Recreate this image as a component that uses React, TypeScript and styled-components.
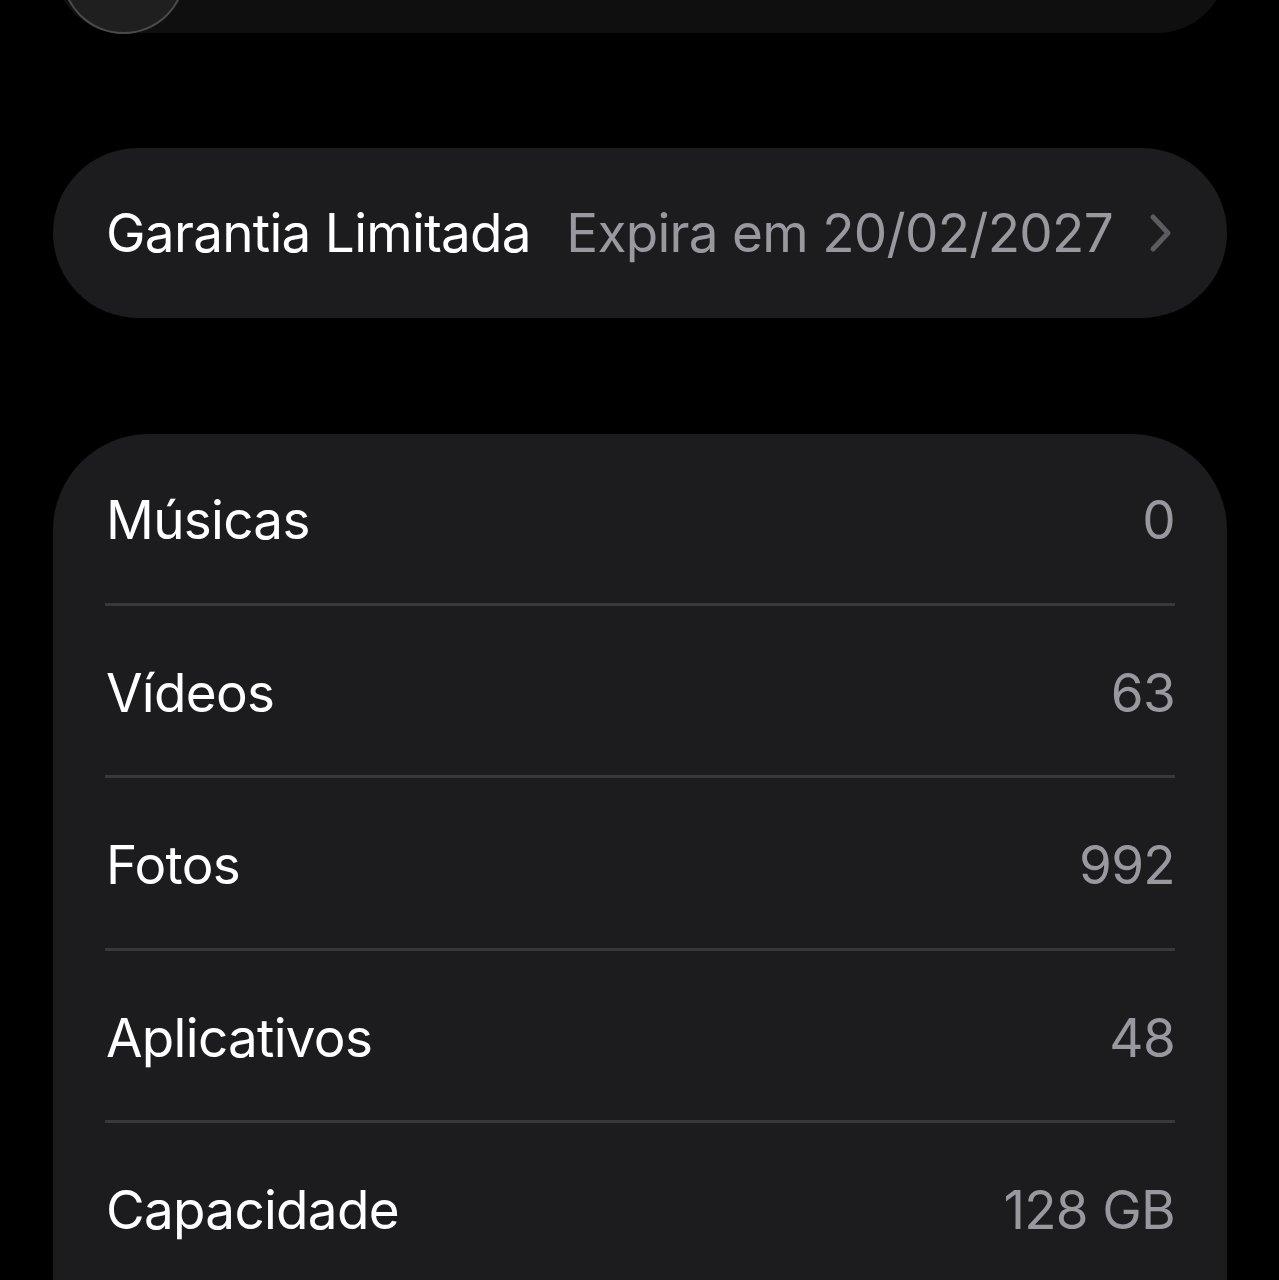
import styled, { createGlobalStyle } from 'styled-components'

const Global = createGlobalStyle`
  html, body {
    margin: 0;
    background: #000;
  }
  body {
    font-family: Inter, "Noto Sans", "Liberation Sans", sans-serif;
    -webkit-font-smoothing: antialiased;
  }
`

const rows = [
  { label: 'Músicas', value: '0' },
  { label: 'Vídeos', value: '63' },
  { label: 'Fotos', value: '992' },
  { label: 'Aplicativos', value: '48' },
  { label: 'Capacidade', value: '128 GB' },
]

export default function App() {
  return (
    <Page>
      <Global />
      <TopCard>
        <Avatar />
      </TopCard>
      <PillCard>
        <Label>Garantia Limitada</Label>
        <Expiry>Expira em 20/02/2027</Expiry>
        <Chevron viewBox='0 0 24 40' aria-hidden>
          <path d='M4 4 L19 20 L4 36' />
        </Chevron>
      </PillCard>
      <ListCard>
        {rows.map((r) => (
          <Row key={r.label}>
            <Label>{r.label}</Label>
            <Value>{r.value}</Value>
          </Row>
        ))}
      </ListCard>
    </Page>
  )
}

const Page = styled.main`
  padding: 0 52px 0 53px;
  height: 1280px;
  overflow: hidden;
  display: flex;
  flex-direction: column;
`

const TopCard = styled.div`
  height: 200px;
  margin-top: -167px;
  border-radius: 70px;
  background: #0f0f10;
  display: flex;
  align-items: flex-end;
  padding-left: 8px;
  flex-shrink: 0;
`

const Avatar = styled.div`
  width: 125px;
  height: 125px;
  margin-bottom: -1px;
  border-radius: 50%;
  background: #1f1f20;
  box-shadow: inset 0 0 0 2px #4a4a4c;
`

const PillCard = styled.div`
  margin-top: 115px;
  height: 170px;
  border-radius: 85px;
  background: #1c1c1e;
  display: flex;
  align-items: center;
  padding: 0 54px 0 53px;
  flex-shrink: 0;
`

const Label = styled.span`
  color: #fff;
  font-size: 53px;
  letter-spacing: -0.7px;
  white-space: nowrap;
`

const Expiry = styled.span`
  color: #98989e;
  font-size: 53px;
  letter-spacing: -0.7px;
  margin-left: auto;
  white-space: nowrap;
`

const Chevron = styled.svg`
  width: 24px;
  height: 40px;
  margin-left: 36px;
  fill: none;
  stroke: #5b5b60;
  stroke-width: 5;
  stroke-linecap: round;
  stroke-linejoin: round;
`

const ListCard = styled.section`
  margin-top: 116px;
  background: #1c1c1e;
  border-radius: 96px 96px 0 0;
  display: flex;
  flex-direction: column;
  flex-shrink: 0;
`

const Row = styled.div`
  position: relative;
  height: 172.5px;
  display: flex;
  align-items: center;
  justify-content: space-between;
  padding: 0 52px 0 53px;
  box-sizing: border-box;
  &:not(:last-child)::after {
    content: '';
    position: absolute;
    left: 52px;
    right: 52px;
    bottom: 1px;
    height: 3px;
    background: #38383a;
  }
`

const Value = styled.span`
  color: #98989e;
  font-size: 53px;
  letter-spacing: -0.7px;
`
